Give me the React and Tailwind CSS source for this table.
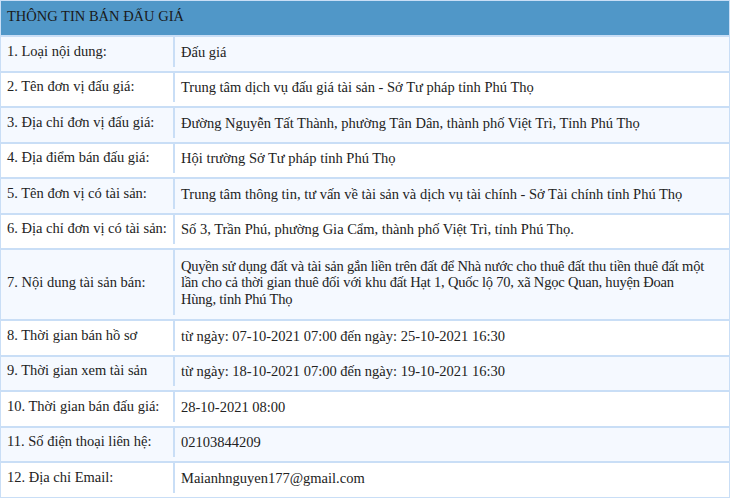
import React from 'react';

const rows = [
  ['1. Loại nội dung:', 'Đấu giá'],
  ['2. Tên đơn vị đấu giá:', 'Trung tâm dịch vụ đấu giá tài sản - Sở Tư pháp tỉnh Phú Thọ'],
  ['3. Địa chỉ đơn vị đấu giá:', 'Đường Nguyễn Tất Thành, phường Tân Dân, thành phố Việt Trì, Tỉnh Phú Thọ'],
  ['4. Địa điểm bán đấu giá:', 'Hội trường Sở Tư pháp tỉnh Phú Thọ'],
  ['5. Tên đơn vị có tài sản:', 'Trung tâm thông tin, tư vấn về tài sản và dịch vụ tài chính - Sở Tài chính tỉnh Phú Thọ'],
  ['6. Địa chỉ đơn vị có tài sản:', 'Số 3, Trần Phú, phường Gia Cẩm, thành phố Việt Trì, tỉnh Phú Thọ.'],
  [
    '7. Nội dung tài sản bán:',
    <span className="whitespace-nowrap tracking-[-0.2px]">
      Quyền sử dụng đất và tài sản gắn liền trên đất để Nhà nước cho thuê đất thu tiền thuê đất một
      <br />
      lần cho cả thời gian thuê đối với khu đất Hạt 1, Quốc lộ 70, xã Ngọc Quan, huyện Đoan
      <br />
      Hùng, tỉnh Phú Thọ
    </span>,
  ],
  ['8. Thời gian bán hồ sơ', 'từ ngày: 07-10-2021 07:00 đến ngày: 25-10-2021 16:30'],
  ['9. Thời gian xem tài sản', 'từ ngày: 18-10-2021 07:00 đến ngày: 19-10-2021 16:30'],
  ['10. Thời gian bán đấu giá:', '28-10-2021 08:00'],
  ['11. Số điện thoại liên hệ:', '02103844209'],
  ['12. Địa chỉ Email:', 'Maianhnguyen177@gmail.com'],
];

export default function App() {
  return (
    <div className="h-[498px] w-[730px] overflow-hidden bg-white font-['Liberation_Serif',serif] text-[14.5px] text-[#222]">
      <div className="border border-[#c9def6]">
        <div className="flex h-[34px] items-center bg-[#5097c8] px-[6px] pb-[2px] text-[#1a1a1a]">
          THÔNG TIN BÁN ĐẤU GIÁ
        </div>
        {rows.map(([label, value], i) => (
          <div
            key={label}
            className={`flex border-t-2 border-[#c9def6] pb-[4px] ${i === 6 ? 'h-[71px]' : 'h-[35.5px]'} ${
              i % 2 === 0 ? 'bg-[#f5f9ff]' : 'bg-white'
            }`}
          >
            <div className="flex w-[174px] shrink-0 items-center border-r-2 border-[#c9def6] px-[6px]">{label}</div>
            <div className="flex min-w-0 flex-1 items-center pl-[6px] pr-[4px] leading-[16.5px]">{value}</div>
          </div>
        ))}
      </div>
    </div>
  );
}
